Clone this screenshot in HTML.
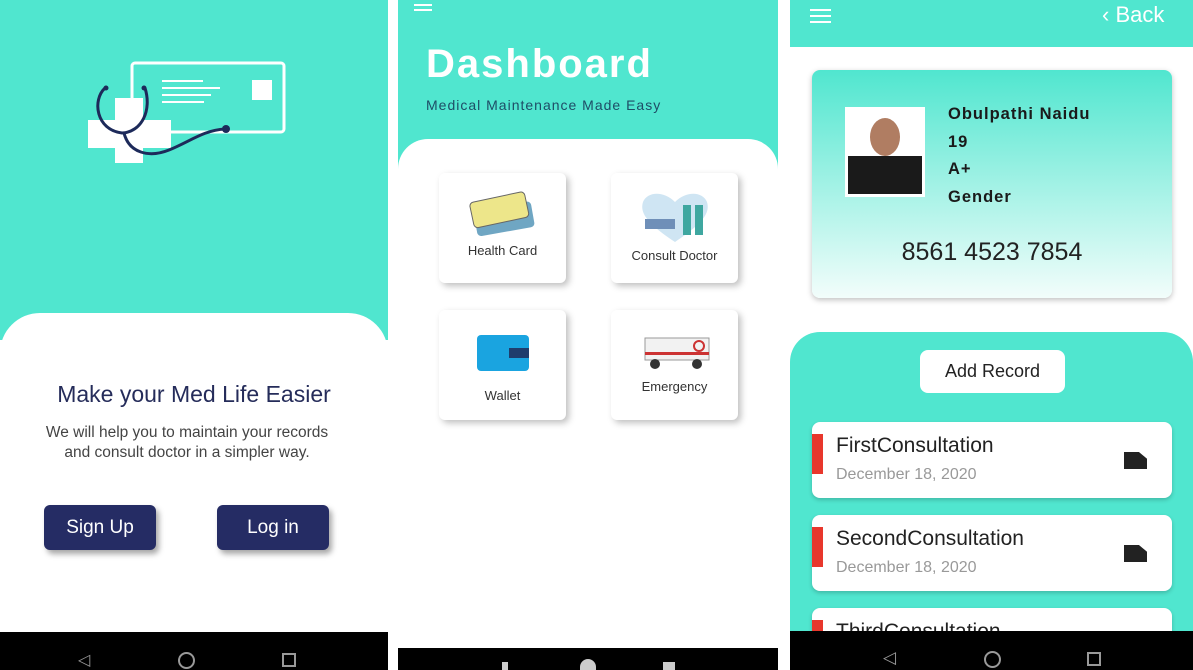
<!DOCTYPE html>
<html><head><meta charset="utf-8"><style>
*{margin:0;padding:0;box-sizing:border-box}
html,body{width:1193px;height:670px;overflow:hidden}
body{position:relative;background:#fff;font-family:"Liberation Sans",sans-serif}
.abs{position:absolute}
.teal{background:#50e6cf}
.nav{background:#000;color:#888}
.btn{position:absolute;background:#252c64;color:#fff;border-radius:6px;font-size:19px;text-align:center;line-height:45px;box-shadow:3px 4px 6px rgba(0,0,0,.35)}
.tile{position:absolute;background:#fff;border-radius:6px;box-shadow:3px 3px 7px rgba(0,0,0,.25);text-align:center;font-size:13px;color:#333}
.rec{position:absolute;left:812px;width:360px;height:76px;background:#fff;border-radius:8px;box-shadow:0 2px 4px rgba(0,0,0,.2);overflow:hidden}
.rec .bar{position:absolute;left:0;top:12px;width:11px;height:40px;background:#e8372c}
.rec .t{position:absolute;left:24px;top:12px;font-size:21px;color:#222}
.rec .d{position:absolute;left:24px;top:44px;font-size:16px;color:#999}
.rec .i{position:absolute;left:312px;top:30px;width:23px;height:17px;background:#222;clip-path:polygon(0 0,65% 0,100% 40%,100% 100%,0 100%)}
</style></head><body>
<!-- panel1 -->
<div class="abs teal" style="left:0;top:0;width:388px;height:340px"></div>
<svg class="abs" style="left:80px;top:55px" width="220" height="170" viewBox="80 55 220 170">
<rect x="132" y="63" width="152" height="69" rx="3" fill="none" stroke="#fff" stroke-width="3"/>
<rect x="252" y="80" width="20" height="20" fill="#fff"/>
<line x1="162" y1="81" x2="203" y2="81" stroke="#fff" stroke-width="2"/>
<line x1="162" y1="88" x2="220" y2="88" stroke="#fff" stroke-width="2"/>
<line x1="162" y1="95" x2="211" y2="95" stroke="#fff" stroke-width="2"/>
<line x1="162" y1="102" x2="204" y2="102" stroke="#fff" stroke-width="2"/>
<path d="M115 98h28v22h28v28h-28v15h-28v-15h-27v-28h27z" fill="#fff"/>
<path d="M105 88C92 100 96 130 122 133C142 132 152 110 145 88" fill="none" stroke="#1d2a5a" stroke-width="3"/>
<circle cx="106" cy="88" r="2.5" fill="#1d2a5a"/><circle cx="144" cy="88" r="2.5" fill="#1d2a5a"/>
<path d="M124 133c5 20 25 25 45 17c20-8 35-20 56-21" fill="none" stroke="#1d2a5a" stroke-width="3"/>
<circle cx="226" cy="129" r="4" fill="#1d2a5a"/>
</svg>
<div class="abs" style="left:0;top:313px;width:388px;height:330px;background:#fff;border-radius:40px 40px 0 0"></div>
<div class="abs" style="left:0;top:381px;width:388px;text-align:center;font-size:23px;color:#252c5a">Make your Med Life Easier</div>
<div class="abs" style="left:0;top:423px;width:374px;text-align:center;font-size:15.5px;line-height:20px;color:#444">We will help you to maintain your records<br>and consult doctor in a simpler way.</div>
<div class="btn" style="left:44px;top:505px;width:112px">Sign Up</div>
<div class="btn" style="left:217px;top:505px;width:112px">Log in</div>
<div class="abs nav" style="left:0;top:632px;width:388px;height:38px"></div>
<div class="abs" style="left:78px;top:650px;color:#999;font-size:16px">◁</div>
<div class="abs" style="left:178px;top:652px;width:17px;height:17px;border:2px solid #999;border-radius:50%"></div>
<div class="abs" style="left:282px;top:653px;width:14px;height:14px;border:2px solid #999"></div>
<!-- panel2 -->
<div class="abs teal" style="left:398px;top:0;width:380px;height:170px"></div>
<div class="abs" style="left:414px;top:4px;width:18px;height:2px;background:#fff;box-shadow:0 5px 0 #fff"></div>
<div class="abs" style="left:426px;top:42px;font-size:40px;font-weight:bold;color:#fff;letter-spacing:2px">Dashboard</div>
<div class="abs" style="left:426px;top:97px;font-size:14px;color:#1e4d66;letter-spacing:1px">Medical Maintenance Made Easy</div>
<div class="abs" style="left:398px;top:139px;width:380px;height:509px;background:#fff;border-radius:30px 30px 0 0"></div>
<div class="tile" style="left:439px;top:173px;width:127px;height:110px"><svg width="80" height="60" style="margin-top:15px" viewBox="0 0 80 60"><rect x="12" y="18" width="58" height="26" rx="4" fill="#6fa6c3" transform="rotate(-10 40 30)"/><rect x="8" y="8" width="56" height="26" rx="4" fill="#ede68a" stroke="#666" transform="rotate(-12 40 20)"/></svg><div style="margin-top:-8px">Health Card</div></div>
<div class="tile" style="left:611px;top:173px;width:127px;height:110px"><svg width="80" height="60" style="margin-top:14px" viewBox="0 0 80 60"><path d="M40 55C10 35 5 25 8 15c4-10 20-12 32 0c12-12 28-10 32 0c3 10-2 20-32 40z" fill="#cfe5f3"/><rect x="10" y="32" width="30" height="10" fill="#6f8fb8"/><rect x="48" y="18" width="8" height="30" fill="#3fa7a0"/><rect x="60" y="18" width="8" height="30" fill="#3fa7a0"/></svg><div style="margin-top:-2px">Consult Doctor</div></div>
<div class="tile" style="left:439px;top:310px;width:127px;height:110px"><div style="margin:25px auto 0;width:52px;height:36px;background:#1aa4e0;border-radius:4px;position:relative"><div style="position:absolute;right:0;top:13px;width:20px;height:10px;background:#1f3d6d"></div></div><div style="margin-top:17px">Wallet</div></div>
<div class="tile" style="left:611px;top:310px;width:127px;height:110px"><svg width="72" height="40" style="margin-top:22px" viewBox="0 0 72 40"><rect x="6" y="6" width="64" height="22" fill="#f2f2f2" stroke="#999"/><rect x="6" y="20" width="64" height="3" fill="#c33"/><circle cx="60" cy="14" r="5" fill="none" stroke="#c33" stroke-width="2"/><circle cx="16" cy="32" r="5" fill="#333"/><circle cx="58" cy="32" r="5" fill="#333"/></svg><div style="margin-top:4px">Emergency</div></div>
<div class="abs nav" style="left:398px;top:648px;width:380px;height:22px"></div>
<div class="abs" style="left:580px;top:659px;width:16px;height:11px;border-radius:8px 8px 0 0;background:#ccc"></div>
<div class="abs" style="left:663px;top:662px;width:12px;height:8px;background:#ccc"></div>
<div class="abs" style="left:502px;top:662px;width:6px;height:8px;background:#ccc"></div>
<!-- panel3 -->
<div class="abs teal" style="left:790px;top:0;width:403px;height:47px"></div>
<div class="abs" style="left:810px;top:9px;width:21px;height:2px;background:#fff;box-shadow:0 6px 0 #fff,0 12px 0 #fff"></div>
<div class="abs" style="left:1102px;top:2px;font-size:22px;color:#fff">‹ Back</div>
<div class="abs" style="left:812px;top:70px;width:360px;height:228px;border-radius:8px;background:linear-gradient(#50e6cf,#f2fdfb);box-shadow:0 2px 6px rgba(0,0,0,.25)"></div>
<div class="abs" style="left:845px;top:107px;width:80px;height:90px;background:#fff;padding:3px"><div style="width:100%;height:100%;background:linear-gradient(#fff 0,#fff 55%,#1a1a1a 55%);position:relative"><div style="position:absolute;left:22px;top:8px;width:30px;height:38px;border-radius:50%;background:#b07d62"></div></div></div>
<div class="abs" style="left:948px;top:101px;font-size:16.5px;font-weight:bold;line-height:27.5px;color:#1a1a1a;letter-spacing:1px">Obulpathi Naidu<br>19<br>A+<br>Gender</div>
<div class="abs" style="left:812px;top:238px;width:360px;text-align:center;font-size:25px;color:#222">8561 4523 7854</div>
<div class="abs teal" style="left:790px;top:332px;width:403px;height:310px;border-radius:30px 30px 0 0"></div>
<div class="abs" style="left:920px;top:350px;width:145px;height:43px;background:#fff;border-radius:8px;text-align:center;line-height:43px;font-size:18px;color:#222">Add Record</div>
<div class="rec" style="top:422px"><div class="bar"></div><div class="t">FirstConsultation</div><div class="d">December 18, 2020</div><div class="i"></div></div>
<div class="rec" style="top:515px"><div class="bar"></div><div class="t">SecondConsultation</div><div class="d">December 18, 2020</div><div class="i"></div></div>
<div class="rec" style="top:608px;height:23px;border-radius:8px 8px 0 0"><div class="bar"></div><div class="t">ThirdConsultation</div></div>
<div class="abs nav" style="left:790px;top:631px;width:403px;height:39px"></div>
<div class="abs" style="left:883px;top:648px;color:#999;font-size:17px">◁</div>
<div class="abs" style="left:984px;top:651px;width:17px;height:17px;border:2px solid #999;border-radius:50%"></div>
<div class="abs" style="left:1087px;top:652px;width:14px;height:14px;border:2px solid #999"></div>
</body></html>
